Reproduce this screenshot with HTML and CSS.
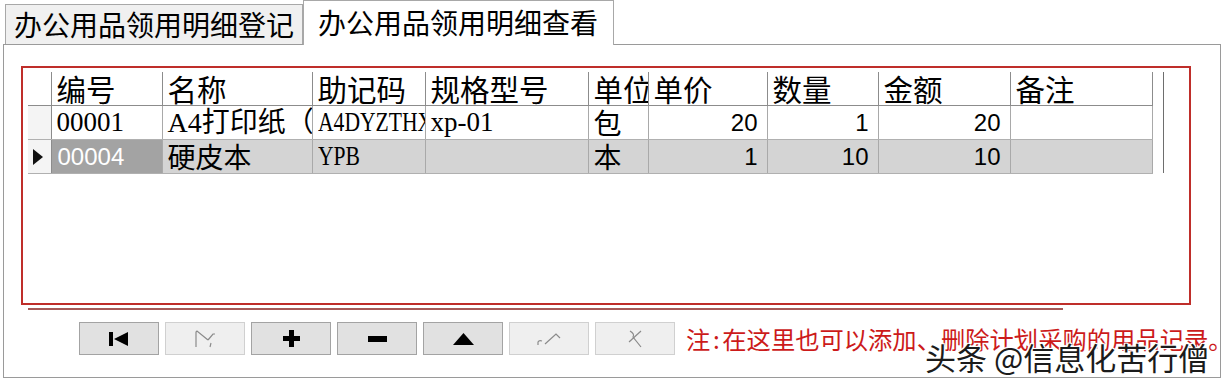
FILE: index.html
```html
<!DOCTYPE html>
<html lang="zh-CN">
<head>
    <meta charset="UTF-8">
    <title>办公用品领用明细查看</title>
    <link rel="stylesheet" href="styles.css">
</head>
<body>
    <!-- Tabs -->
    <div class="tabs">
        <div class="tab">办公用品领用明细登记</div>
        <div class="tab active">办公用品领用明细查看</div>
    </div>

    <div class="panel">
        <!-- Datasheet -->
        <div class="grid-frame">
            <div class="grid">
                <table class="sheet">
                    <colgroup>
                        <col style="width:23px">
                        <col style="width:111px">
                        <col style="width:150px">
                        <col style="width:113px">
                        <col style="width:163px">
                        <col style="width:60px">
                        <col style="width:119px">
                        <col style="width:111px">
                        <col style="width:132px">
                        <col style="width:142px">
                    </colgroup>
                    <thead>
                        <tr>
                            <th class="sel-col"></th>
                            <th>编号</th>
                            <th>名称</th>
                            <th>助记码</th>
                            <th>规格型号</th>
                            <th>单位</th>
                            <th>单价</th>
                            <th>数量</th>
                            <th>金额</th>
                            <th>备注</th>
                        </tr>
                    </thead>
                    <tbody>
                        <tr>
                            <td class="sel-col"></td>
                            <td class="code">00001</td>
                            <td class="code name">A4打印纸（打印用）</td>
                            <td class="code"><span class="squeeze">A4DYZTHX</span></td>
                            <td class="code">xp-01</td>
                            <td>包</td>
                            <td class="num">20</td>
                            <td class="num">1</td>
                            <td class="num">20</td>
                            <td></td>
                        </tr>
                        <tr class="current">
                            <td class="sel-col">
                                <svg width="10" height="16" viewBox="0 0 10 16"><polygon points="0,0 10,8 0,16" fill="#111"/></svg>
                            </td>
                            <td class="num left picked">00004</td>
                            <td>硬皮本</td>
                            <td class="code"><span class="squeeze">YPB</span></td>
                            <td></td>
                            <td>本</td>
                            <td class="num">1</td>
                            <td class="num">10</td>
                            <td class="num">10</td>
                            <td></td>
                        </tr>
                    </tbody>
                </table>
                <div class="vscroll"></div>
            </div>
        </div>
        <div class="frame-line"></div>

        <!-- Record buttons -->
        <div class="toolbar">
            <button class="nav-btn">
                <svg width="20" height="14" viewBox="0 0 20 14"><rect x="0" y="0" width="4" height="14" fill="#000"/><polygon points="5,7 19,0 19,14" fill="#000"/></svg>
            </button>
            <button class="nav-btn off">
                <svg width="24" height="18" viewBox="0 0 24 18" fill="none" stroke="#8a8a8a" stroke-width="1.2"><polyline points="3,17 3,2 4,1 15,10"/><polyline points="15,10 20,4 22,4"/><line x1="18" y1="13" x2="17" y2="17"/></svg>
            </button>
            <button class="nav-btn">
                <svg width="17" height="17" viewBox="0 0 17 17"><rect x="6" y="0" width="5" height="17" fill="#000"/><rect x="0" y="6" width="17" height="5" fill="#000"/></svg>
            </button>
            <button class="nav-btn">
                <svg width="19" height="6" viewBox="0 0 19 6"><rect x="0" y="0" width="19" height="6" fill="#000"/></svg>
            </button>
            <button class="nav-btn">
                <svg width="21" height="12" viewBox="0 0 21 12"><polygon points="10.5,0 21,12 0,12" fill="#000"/></svg>
            </button>
            <button class="nav-btn off">
                <svg width="26" height="14" viewBox="0 0 26 14" fill="none" stroke="#8a8a8a" stroke-width="1.2"><path d="M2 13 L2 10 Q3 8 6 9"/><path d="M9 12 L20 2 L24 6"/></svg>
            </button>
            <button class="nav-btn off">
                <svg width="20" height="20" viewBox="0 0 20 20" fill="none" stroke="#8a8a8a" stroke-width="1.2"><path d="M5 2 Q10 5 8 8 L16 18"/><path d="M16 2 L4 13"/></svg>
            </button>
            <span class="note">注<span class="colon">:</span>在这里也可以添加、删除计划采购的用品记录。</span>
        </div>

        <div class="watermark">头条 @信息化苦行僧</div>
    </div>
</body>
</html>
```

FILE: styles.css
```css
body {
    margin: 0;
    background-color: #fff;
    font-family: "Noto Sans CJK SC", "Liberation Sans", sans-serif;
    color: #000;
    overflow: hidden;
}

/* Tabs */
.tabs {
    display: flex;
    align-items: flex-end;
    height: 44px;
    padding-left: 5px;
}
.tab {
    box-sizing: border-box;
    width: 298px;
    height: 40px;
    padding-left: 8px;
    border: 1px solid #a8a8a8;
    border-bottom: none;
    background-color: #f0f0f0;
    font-size: 28px;
    line-height: 38px;
    white-space: nowrap;
}
.tab.active {
    position: relative;
    z-index: 1;
    width: 311px;
    height: 45px;
    margin-bottom: -1px;
    padding-left: 14px;
    background-color: #fff;
    line-height: 42px;
}

/* Panel */
.panel {
    position: relative;
    box-sizing: border-box;
    width: 1218px;
    height: 334px;
    margin-left: 3px;
    padding: 21px 0 0 17px;
    border: 1px solid #9a9a9a;
    background-color: #fff;
}
.grid-frame {
    box-sizing: border-box;
    width: 1170px;
    height: 239px;
    padding: 4px 0 0 5px;
    border: 2px solid #bf2e2a;
}
.grid {
    display: flex;
    align-items: flex-start;
}
.vscroll {
    box-sizing: border-box;
    width: 11px;
    height: 101px;
    border-right: 1px solid #6e6e6e;
}
.frame-line {
    width: 1035px;
    height: 2px;
    margin: 3px 0 0 7px;
    background-color: #a65a58;
}

/* Datasheet */
.sheet {
    width: 1124px;
    table-layout: fixed;
    border-collapse: collapse;
}
.sheet th,
.sheet td {
    height: 33px;
    padding: 0 0 0 5px;
    overflow: hidden;
    white-space: nowrap;
    text-align: left;
    vertical-align: middle;
    border-right: 1px solid #a9a9a9;
    border-bottom: 1px solid #b0b0b0;
}
.sheet th {
    font-size: 29.5px;
    font-weight: normal;
    line-height: 33px;
    border-right-color: #8c8c8c;
    border-bottom-color: #8c8c8c;
}
.sheet td {
    font-size: 28px;
    line-height: 33px;
}
.sheet .sel-col {
    padding: 0 0 0 5px;
    background-color: #f4f4f4;
    border-right-color: #8c8c8c;
}
.sheet th.sel-col {
    background-color: #fff;
}
.sel-col svg {
    display: block;
}
.sheet td.code {
    font-family: "Liberation Serif", "Noto Sans CJK SC", serif;
    font-size: 27px;
}
.sheet td.name {
    font-size: 28px;
}
.squeeze {
    display: inline-block;
    transform: scaleX(0.8);
    transform-origin: left center;
}
.sheet td.num {
    padding: 0 9px 0 0;
    text-align: right;
    font-family: "Liberation Sans", sans-serif;
    font-size: 24px;
}
.sheet td.num.left {
    padding: 0 0 0 6px;
    text-align: left;
}
.sheet tr.current td {
    background-color: #d4d4d4;
}
.sheet tr.current td.sel-col {
    background-color: #f4f4f4;
}
.sheet tr.current td.picked {
    background-color: #a3a3a3;
    color: #fff;
}

/* Toolbar */
.toolbar {
    display: flex;
    align-items: center;
    gap: 6px;
    margin-top: 11px;
    padding-left: 58px;
}
.nav-btn {
    display: flex;
    flex-shrink: 0;
    align-items: center;
    justify-content: center;
    box-sizing: border-box;
    width: 80px;
    height: 33px;
    padding: 0;
    border: 1px solid #a3a3a3;
    background-color: #e1e1e1;
}
.nav-btn.off {
    border-color: #d0d0d0;
    background-color: #efefef;
}
.note {
    flex-shrink: 0;
    margin-left: 5px;
    color: #cc1a1a;
    font-size: 24.3px;
    white-space: nowrap;
}
.colon {
    display: inline-block;
    width: 12px;
    text-align: center;
}

/* Watermark */
.watermark {
    position: absolute;
    left: 921px;
    top: 292px;
    font-size: 31px;
    line-height: 40px;
    color: #1b1b1b;
    white-space: nowrap;
    text-shadow: 1px 1px 0 #fff, -1px -1px 0 #fff, 1px -1px 0 #fff, -1px 1px 0 #fff, 0 0 3px #fff;
}
```
